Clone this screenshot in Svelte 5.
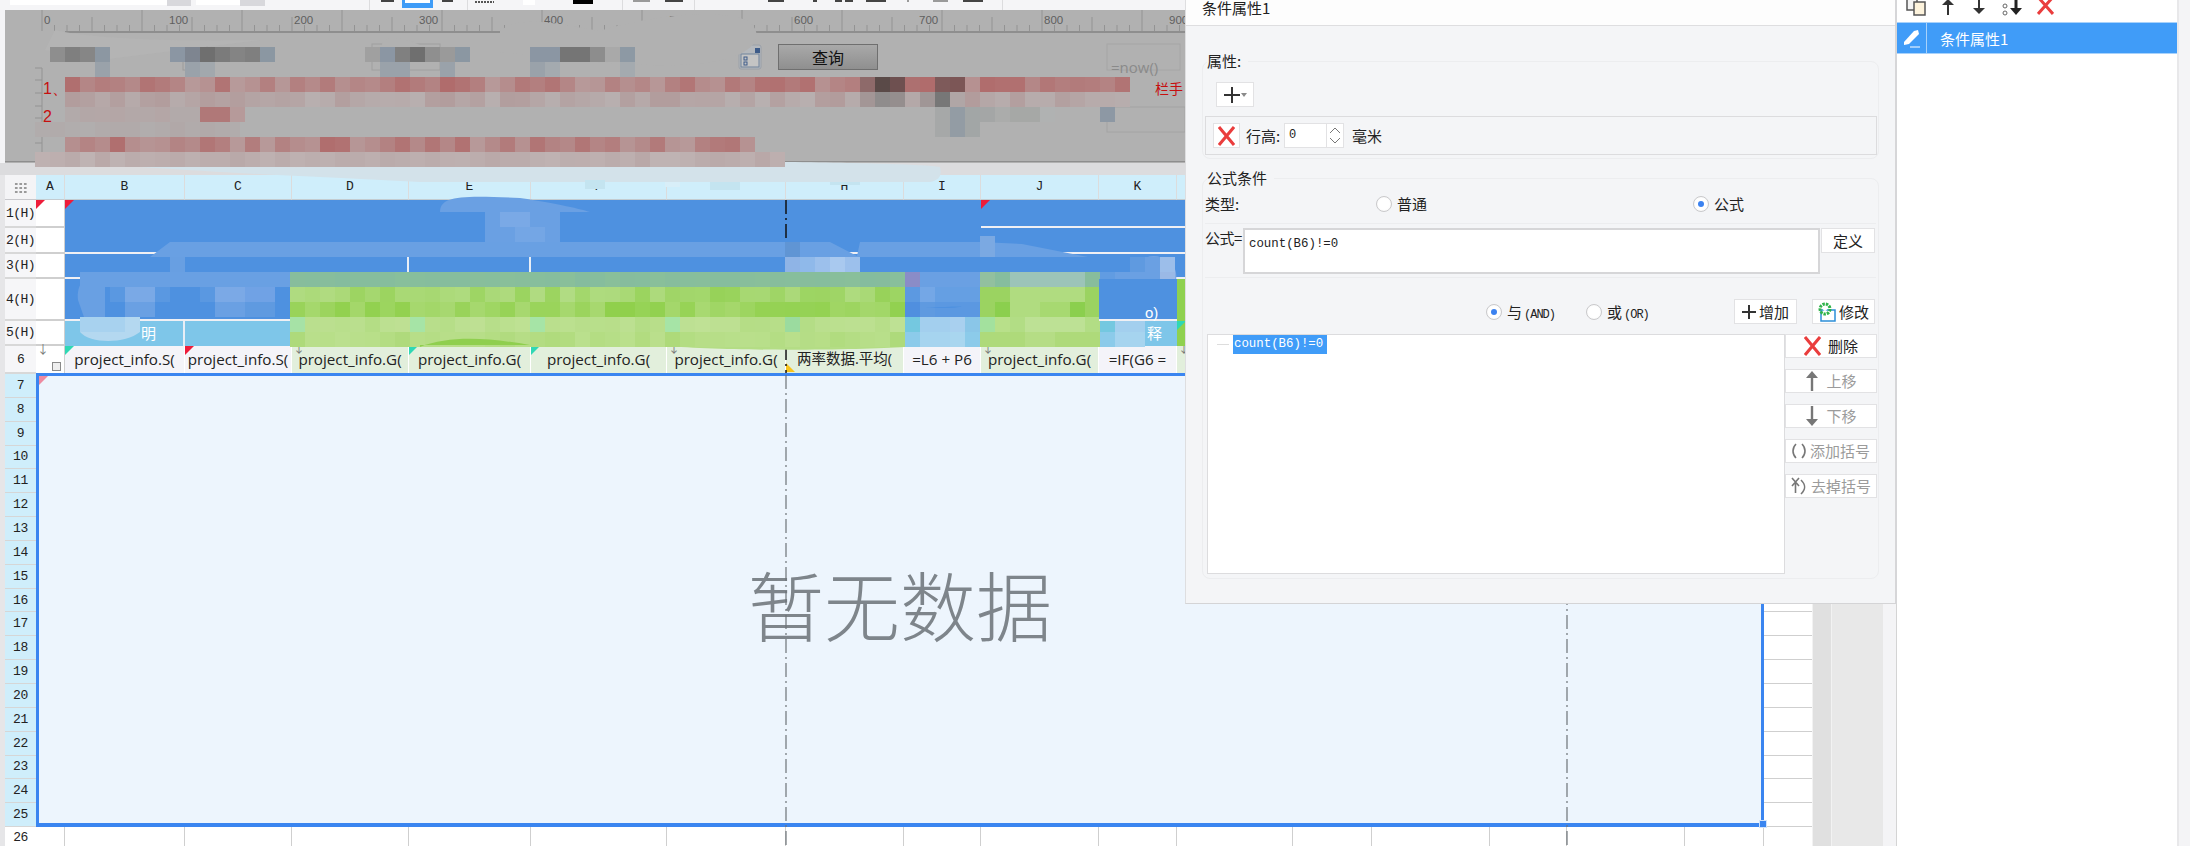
<script>
  const h = (i) => { const s = Math.sin(i * 12.9898) * 43758.5453; return s - Math.floor(s); };
  const hex = (c) => [1, 3, 5].map((p) => parseInt(c.slice(p, p + 2), 16));
  const mix = (a, b, t) => {
    const A = hex(a), B = hex(b);
    return `rgb(${A.map((v, i) => Math.round(v + (B[i] - v) * t)).join(',')})`;
  };
  const mosaic = [];
  let seed = 1;
  function band(y, x0, x1, a, b) {
    for (let x = x0; x < x1; x += 15) {
      seed += 1;
      mosaic.push({ x, y, w: Math.min(15, x1 - x), f: mix(a, b, h(seed)) });
    }
  }
  function cells(y, x0, list) {
    list.forEach((f, i) => mosaic.push({ x: x0 + i * 15, y, w: 15, f }));
  }
  // designer: blurred widgets
  cells(47, 50, ['#8e8e8e', '#7f7f7f', '#868686', '#8c97a2']);
  cells(47, 170, ['#8b96a3', '#7e8590', '#6f6f6f', '#7b7b7b', '#848484', '#7f7f7f', '#8b97a2']);
  cells(47, 365, ['#a0a0a0', '#8b96a3', '#808080', '#6f6f6f', '#8f8f8f', '#9a9a9a', '#8b97a2']);
  cells(47, 530, ['#8b96a3', '#8b96a3', '#757575', '#757575', '#808080']);
  cells(47, 590, ['#8d8d8d', '#a9a9a9', '#8d99a4']);
  cells(62, 95, ['#9aa2aa']);
  cells(62, 185, ['#9aa2aa', '#a2a8ad']);
  cells(62, 380, ['#9aa2aa', '#9aa2aa']);
  cells(62, 440, ['#9aa2aa']);
  cells(62, 530, ['#9aa2aa', '#a4aaaf']);
  cells(62, 620, ['#a4aaaf']);
  // designer: red lines
  band(77, 65, 1130, '#b06c6c', '#b79a9a');
  band(92, 65, 1130, '#b29c9c', '#b8b0b0');
  cells(77, 860, ['#8e6a6a', '#5a4a48', '#6e5050', '#ad7070', '#b06c6c', '#7e5a5a', '#7c5656']);
  cells(92, 860, ['#a39696', '#8f8c8c', '#958e8e', '#b4a8a8', '#a09696', '#777777', '#b0a6a6']);
  band(107, 65, 200, '#b2aaaa', '#b4a6a6');
  cells(107, 200, ['#b07878', '#b07878', '#b69a9a']);
  band(122, 35, 240, '#b1a8a8', '#b1aeae');
  cells(107, 935, ['#a6a8a8', '#939ca4', '#a2a6a6', '#a4a6a6', '#abacab', '#a6a8a6', '#a6a8a6', '#b0b2b2']);
  cells(122, 935, ['#a6a8a8', '#939ca4', '#a2a6a6']);
  cells(107, 1100, ['#8d98a4']);
  band(137, 65, 755, '#b06e6e', '#b79a9a');
  band(152, 35, 785, '#b9a8a8', '#bfb3b3');
  // table: blue + green strokes
  cells(212, 485, ['#6aa0e3', '#7aa9e6', '#7aa9e6', '#6aa0e3', '#6aa0e3']);
  cells(227, 485, ['#6aa0e3', '#6aa0e3', '#74a6e5', '#74a6e5', '#6aa0e3']);
  band(257, 170, 185, '#689fe2', '#689fe2');
  cells(257, 785, ['#8fb4e6', '#8fb9ea', '#9cc0ec', '#a9c9ef', '#9cc0ec']);
  cells(257, 1130, ['#5f9ae0', '#6aa0e3', '#9cbeea']);
  band(272, 80, 290, '#69a0e3', '#69a0e3');
  band(272, 290, 905, '#85bc9e', '#89bf9a');
  cells(272, 905, ['#8a8cc7', '#6aa0e3', '#6aa0e3', '#6aa0e3', '#6aa0e3']);
  cells(272, 980, ['#92c09f', '#86bd9e', '#9cc4b8', '#9cc4b8', '#9cc4b8', '#9cc4b8', '#9cc4b8', '#88bd9c']);
  cells(272, 1100, ['#619ce2', '#6aa0e3', '#6aa0e3', '#6aa0e3', '#9ab9e6']);
  cells(287, 110, ['#5a98e1', '#7aa9e6', '#7aa9e6', '#5a98e1']);
  cells(287, 200, ['#5a98e1', '#7ba9e6', '#7ba9e6', '#70a2e5', '#70a2e5']);
  cells(302, 110, ['#4e91e0', '#6aa0e3', '#6aa0e3']);
  cells(302, 215, ['#6aa0e3', '#6aa0e3', '#5f9ae0', '#5f9ae0']);
  band(287, 290, 905, '#91d04f', '#b2dc84');
  band(302, 290, 905, '#8fd04b', '#a9d972');
  cells(287, 905, ['#5c99e1', '#74a7e6', '#659fe3', '#659fe3', '#659fe3']);
  cells(302, 905, ['#508fdf', '#5f9ae0', '#5b98e1', '#5b98e1', '#5b98e1']);
  cells(287, 980, ['#9bd361', '#9bd361', '#b0dc80', '#b0dc80', '#b0dc80', '#b0dc80', '#b0dc80', '#9bd361']);
  cells(302, 980, ['#9bd361', '#8bcf4e', '#b0dc80', '#b0dc80', '#a7d971', '#a7d971', '#8bcf4e', '#9bd361']);
  cells(287, 1100, ['#4e91e0', '#5c99e1', '#6aa0e3', '#6aa0e3']);
  cells(302, 1100, ['#4e91e0', '#5c99e1', '#6aa0e3']);
  band(317, 290, 905, '#b4dd85', '#bfe195');
  band(332, 290, 905, '#aeda7a', '#bbe08e');
  cells(317, 290, ['#a6e2a6']);
  cells(317, 410, ['#a6e4a6']);
  cells(317, 530, ['#a6e4a6']);
  cells(317, 665, ['#a6e4a6']);
  cells(317, 785, ['#9bdb9f']);
  cells(317, 905, ['#74c8e0', '#a3cfee', '#a3cfee', '#a9d0ef', '#8ac6e8']);
  cells(332, 905, ['#8ccbea', '#a6d4ef', '#a6d4ef', '#a9d6ef', '#8ccbea']);
  cells(317, 980, ['#a3e19e', '#b8e08a', '#b2dd85', '#bde195', '#bde195', '#bde195', '#bde195', '#b2dd85']);
  cells(332, 980, ['#aeda7a', '#aeda7a', '#aeda7a', '#b5dd85', '#b5dd85', '#aeda7a', '#aeda7a', '#aeda7a']);
  cells(317, 1100, ['#74c8e0', '#a3cfee', '#a3cfee']);
  cells(332, 1100, ['#8ccbea', '#a6d4ef', '#a6d4ef']);
  cells(317, 80, ['#a8d2ef', '#a8d2ef', '#a8d2ef', '#b4d8f0']);

  const rulerTicks = [];
  for (let i = 0; i * 12.5 < 1150; i += 1) {
    const x = 42 + i * 12.5;
    rulerTicks.push({ x, top: i % 8 === 0 ? 10 : i % 4 === 0 ? 17 : 25 });
  }
  const rulerLabels = [0, 100, 200, 300, 400, 500, 600, 700, 800, 900];
  const sideTicks = [68, 80, 93, 106, 118, 131, 143, 156];

  const cols = ['B', 'C', 'D', 'E', 'F', 'G', 'H', 'I', 'J', 'K', 'L', 'M', 'N', 'O', 'P', 'Q', 'R'];
  const bodyRows = Array.from({ length: 19 }, (_, i) => i + 7);
  const row6 = [
    { t: 'project_info.S(', c: 'plain', flag: 'teal' },
    { t: 'project_info.S(', c: 'plain', flag: 'red' },
    { t: 'project_info.G(', c: 'pale', flag: 'down' },
    { t: 'project_info.G(', c: 'pale', flag: 'teal' },
    { t: 'project_info.G(', c: 'pale', flag: 'teal' },
    { t: 'project_info.G(', c: 'pale', flag: 'down' },
    { t: '两率数据.平均(', c: 'pale cjk', flag: 'amber' },
    { t: '=L6 + P6', c: 'plain' },
    { t: 'project_info.G(', c: 'pale', flag: 'down' },
    { t: '=IF(G6 =', c: 'plain' },
    { t: '', c: 'pale', flag: 'down' },
    { t: '', c: 'pale' }, { t: '', c: 'pale' }, { t: '', c: 'pale' }, { t: '', c: 'pale' }, { t: '', c: 'pale' }
  ];
  const toolMarks = [
    [10, 157, 'w'], [167, 24, 'g'], [196, 44, 'w'], [240, 25, 'g'], [369, 1, 'l'], [381, 13, 'd'],
    [405, 25, 'b'], [442, 11, 'd'], [467, 1, 'l'], [475, 19, 'dots'], [523, 12, 'w'], [573, 20, 'k'],
    [622, 1, 'l'], [633, 17, 'm'], [665, 18, 'd'], [694, 1, 'l'], [768, 16, 'd'], [813, 4, 'd'],
    [835, 7, 'd'], [845, 8, 'd'], [866, 20, 'd'], [907, 2, 'm'], [933, 15, 'm'], [963, 20, 'd'], [1002, 1, 'l']
  ];
</script>

<div class="page">
  <div class="main">
    <div class="toolbar">
      {#each toolMarks as m}
        <span class="mark {m[2]}" style="left:{m[0]}px;width:{m[1]}px"></span>
      {/each}
    </div>

    <div class="designer">
      <svg class="ruler" width="1180" height="153" viewBox="5 10 1180 153">
        {#each rulerTicks as t}
          <line x1={t.x} x2={t.x} y1={t.top} y2="31" stroke="#939393" />
        {/each}
        {#each rulerLabels as l, i}
          <text x={44 + i * 125} y="24" class="rtext">{l}</text>
        {/each}
        <rect x="65" y="31" width="1120" height="2" fill="#8e8e8e" />
        <line x1="42" x2="42" y1="68" y2="160" stroke="#939393" />
        {#each sideTicks as y}
          <line x1="35" x2="42" y1={y} y2={y} stroke="#939393" />
        {/each}
        <rect x="183" y="44" width="24" height="26" fill="none" stroke="#9c9c9c" />
        <rect x="372" y="44" width="68" height="26" fill="none" stroke="#a0a0a0" />
        <rect x="1107" y="107" width="78" height="25" fill="none" stroke="#a4a4a4" />
        <rect x="1107" y="44" width="73" height="26" fill="none" stroke="#a6a6a6" />
      </svg>
      <span class="nowtext">=now()</span>
      <span class="date">
        <svg width="24" height="26" viewBox="0 0 24 26">
          <rect x="1" y="1" width="22" height="24" rx="2" fill="#b4b8bd" stroke="#9aa0a8" />
          <rect x="3" y="10" width="18" height="13" fill="#c4c4c4" stroke="#71839c" />
          <rect x="17" y="4" width="5" height="5" fill="#3d5b89" />
          <rect x="6" y="13" width="3" height="3" fill="none" stroke="#3d5b89" />
          <rect x="6" y="18" width="3" height="3" fill="none" stroke="#3d5b89" />
        </svg>
      </span>
      <button class="query">查询</button>
      <span class="num one">1、</span>
      <span class="num two">2</span>
      <span class="redtail">栏手</span>
    </div>
    <div class="strip"></div>

    <div class="sheetwrap">
      <div class="gutter"></div>
      <div class="sheet">
        <div class="corner"><span class="grip"></span></div>
        <div class="colhead">A</div>
        {#each cols as c}
          <div class="colhead">{c === 'R' ? '' : c}</div>
        {/each}

        <div class="rowhead soft">1(H)</div>
        <div class="blank"><i class="flag red"></i></div>
        <div class="blue s8"><i class="flag red"></i></div>
        <div class="blue s8 line"><i class="flag red"></i></div>
        <div class="blank"></div>

        <div class="rowhead soft">2(H)</div>
        <div class="blank"></div>
        <div class="blue s8 line"></div>
        <div class="blue s8 line"></div>
        <div class="blank"></div>

        <div class="rowhead soft">3(H)</div>
        <div class="blank"></div>
        <div class="blue s3 line div"></div>
        <div class="blue div line"></div>
        <div class="blue s4 line"></div>
        <div class="blue s8 line"></div>
        <div class="blank"></div>

        <div class="rowhead soft">4(H)</div>
        <div class="blank"></div>
        <div class="blue s2 line"></div>
        <div class="green s5 line"></div>
        <div class="blue line"></div>
        <div class="green line"></div>
        <div class="blue line note">o)</div>
        <div class="green s6"></div>
        <div class="blank"></div>

        <div class="rowhead soft">5(H)</div>
        <div class="blank"></div>
        <div class="sky div"><span class="skytext left">明</span></div>
        <div class="sky"></div>
        <div class="green s5"></div>
        <div class="sky"></div>
        <div class="green"></div>
        <div class="sky"><span class="skytext right">释</span></div>
        <div class="green s6"><i class="flag teal"></i></div>
        <div class="blank"></div>

        <div class="rowhead soft">6</div>
        <div class="blank a6">
          <i class="darrow">↓</i>
          <span class="expand"></span>
        </div>
        {#each row6 as c}
          <div class="formula {c.c}">
            {#if c.flag === 'down'}<i class="darrow">↓</i>{:else if c.flag}<i class="flag {c.flag}"></i>{/if}
            <span>{c.t}</span>
          </div>
        {/each}
        <div class="blank"></div>

        {#each bodyRows as r, i}
          <div class="rowhead">{r}</div>
          {#if i === 0}
            <div class="selection">
              <i class="flag ghost"></i>
              <div class="empty">暂无数据</div>
              <i class="handle"></i>
            </div>
          {/if}
          <div class="blank ruled"></div>
        {/each}

        <div class="rowhead soft last">26</div>
        {#each Array(17) as _}
          <div class="blank tail"></div>
        {/each}
        <div class="blank open"></div>
      </div>
      <div class="rail one"></div>
      <div class="rail two"></div>
      <div class="rail three"></div>
    </div>

    <svg class="overlay" width="1897" height="846" viewBox="0 0 1897 846">
      <path d="M786 200V242M786 346V373" stroke="#111" stroke-width="1.5" stroke-dasharray="14 4 2 4" />
      <path d="M786 375V846M1567 375V846" stroke="#6d7378" stroke-width="1.2" stroke-dasharray="14 4 2 4" />
      <path d="M140 167C260 163 300 172 350 163C500 160 900 160 940 167C942 175 940 180 930 182L420 182C340 178 260 175 140 167Z" fill="#d3e2ea" />
      <rect x="585" y="180" width="20" height="9" fill="#c4e4f0" />
      <rect x="665" y="182" width="15" height="5" fill="#d8eef8" />
      <rect x="710" y="182" width="30" height="8" fill="#c4e4f0" />
      <rect x="830" y="182" width="30" height="3" fill="#c4e4f0" />
      <path d="M500 31C520 14 560 24 600 31C640 18 720 6 750 22C760 32 760 44 740 54C700 72 620 66 500 52Z" fill="#b1b1b1" />
      <path d="M383 40C400 34 420 44 440 56L380 54Z" fill="#b1b1b1" />
      <path d="M55 30C80 36 140 42 260 40L100 60L45 50Z" fill="#b4b4b4" />
      <path d="M150 257L170 242H830L857 256L860 242H980L1022 244L1088 257Z" fill="#69a0e3" />
      <rect x="785" y="242" width="15" height="15" fill="#6095d4" />
      <rect x="980" y="236" width="15" height="21" fill="#7ba9e2" />
      <path d="M440 212C440 196 460 195 520 198C560 204 580 209 590 212Z" fill="#6aa0e3" />
      <rect x="485" y="212" width="75" height="15" fill="#6aa0e3" />
      <path d="M1130 272C1135 258 1155 250 1170 262C1180 270 1178 290 1165 300L1130 300Z" fill="#7faae6" />
      <path d="M78 300C76 285 85 272 105 272V320H85Z" fill="#69a0e3" />
      <path d="M290 345H660C720 352 860 350 905 347V345H980V342C1020 346 1060 350 1099 342V345H290Z" fill="#b4dd85" />
      <path d="M290 340C340 349 390 347 420 344L530 345H290Z" fill="#afdb7d" />
      {#each mosaic as m}
        <rect x={m.x} y={m.y} width={m.w} height="15" fill={m.f} shape-rendering="crispEdges" />
      {/each}
      <path d="M80 332C90 344 125 344 140 332Z" fill="#b4d8f0" />
      <path d="M420 347C450 335 490 338 530 345L420 345Z" fill="#8fcf4e" />
      <path d="M950 308C975 306 955 306 925 308Z" fill="#4e91e0" />
    </svg>

    <section class="dialog">
      <header class="title">条件属性1</header>
      <div class="group first">
        <span class="legend">属性:</span>
        <button class="tool plus">
          <svg width="16" height="16" viewBox="0 0 16 16"><path d="M8 0V16M0 8H16" stroke="#333" stroke-width="2" /></svg>
          <svg width="6" height="4" viewBox="0 0 6 4"><path d="M0 0H6L3 4Z" fill="#8a8a8a" /></svg>
        </button>
        <div class="propbar">
          <button class="tool square">
            <svg width="17" height="20" viewBox="0 0 17 20"><path d="M1 1L16 19M16 1L1 19" stroke="#ea3d3d" stroke-width="3" /></svg>
          </button>
          <span class="label">行高:</span>
          <span class="spin">
            <span class="val">0</span>
            <span class="arrows">
              <svg width="10" height="6" viewBox="0 0 10 6"><path d="M0 6L5 1L10 6" fill="none" stroke="#777" /></svg>
              <svg width="10" height="6" viewBox="0 0 10 6"><path d="M0 0L5 5L10 0" fill="none" stroke="#777" /></svg>
            </span>
          </span>
          <span class="label unit">毫米</span>
        </div>
      </div>

      <div class="group second">
        <span class="legend">公式条件</span>
        <div class="typerow">
          <span class="typelabel">类型:</span>
          <span class="radio"></span><span class="rtxt w1">普通</span>
          <span class="radio on"></span><span class="rtxt">公式</span>
        </div>
        <div class="formularow">
          <span class="flabel">公式=</span>
          <div class="area">count(B6)!=0</div>
          <button class="tool define">定义</button>
        </div>
        <div class="logicrow">
          <span class="radio on"></span><span class="rtxt w2">与<em>(AND)</em></span>
          <span class="radio"></span><span class="rtxt w3">或<em>(OR)</em></span>
          <button class="tool act">
            <svg width="14" height="14" viewBox="0 0 14 14"><path d="M7 0V14M0 7H14" stroke="#333" stroke-width="2" /></svg>增加
          </button>
          <button class="tool act">
            <svg width="18" height="20" viewBox="0 0 18 20">
              <path d="M3 8H17V19H3Z" fill="#fff" stroke="#2d8fd8" stroke-width="1.5" />
              <circle cx="7" cy="7" r="5" fill="none" stroke="#2fb34a" stroke-width="3" stroke-dasharray="2.4 1" />
              <circle cx="7" cy="7" r="2" fill="#fff" />
            </svg>修改
          </button>
        </div>
        <div class="treerow">
          <div class="tree">
            <i class="stub"></i><span class="node">count(B6)!=0</span>
          </div>
          <div class="side">
            <button class="tool sbtn">
              <svg width="17" height="20" viewBox="0 0 17 20"><path d="M1 1L16 19M16 1L1 19" stroke="#ea3d3d" stroke-width="3" /></svg>删除
            </button>
            <button class="tool sbtn off">
              <svg width="14" height="20" viewBox="0 0 14 20"><path d="M7 20V4" stroke="#777" stroke-width="2.4" /><path d="M1 7L7 0L13 7Z" fill="#777" /></svg>上移
            </button>
            <button class="tool sbtn off">
              <svg width="14" height="20" viewBox="0 0 14 20"><path d="M7 0V16" stroke="#777" stroke-width="2.4" /><path d="M1 13L7 20L13 13Z" fill="#777" /></svg>下移
            </button>
            <button class="tool sbtn off tight">
              <svg width="14" height="16" viewBox="0 0 14 16"><path d="M4 1C0 5 0 11 4 15M10 1C14 5 14 11 10 15" fill="none" stroke="#777" stroke-width="1.6" /></svg>添加括号
            </button>
            <button class="tool sbtn off tight">
              <svg width="16" height="18" viewBox="0 0 16 18"><path d="M1 1L8 9M8 1L1 9M4.5 6V16" stroke="#777" stroke-width="1.6" fill="none" /><path d="M10 3C15 8 15 12 10 17" fill="none" stroke="#777" stroke-width="1.6" /></svg>去掉括号
            </button>
          </div>
        </div>
      </div>
    </section>
  </div>

  <aside class="panel">
    <div class="ptools">
      <svg width="22" height="16" viewBox="0 0 22 16"><path d="M2 -4H12V10H2Z" fill="#f4f4f4" stroke="#555" stroke-width="1.5" /><path d="M9 2H20V15H9Z" fill="#fdf3dc" stroke="#555" stroke-width="1.5" /></svg>
      <svg class="p1" width="14" height="15" viewBox="0 0 14 15"><path d="M7 15V3" stroke="#333" stroke-width="2" /><path d="M1 5L7 -1L13 5Z" fill="#333" /></svg>
      <svg class="p2" width="14" height="15" viewBox="0 0 14 15"><path d="M7 0V10" stroke="#333" stroke-width="2" /><path d="M1 8L7 14L13 8Z" fill="#333" /></svg>
      <svg class="p3" width="22" height="17" viewBox="0 0 22 17"><circle cx="3" cy="6" r="2" fill="none" stroke="#666" /><circle cx="3" cy="13" r="2" fill="none" stroke="#666" /><path d="M14 0V10" stroke="#222" stroke-width="3" /><path d="M8 8L14 15L20 8Z" fill="#222" /></svg>
      <svg class="p4" width="17" height="15" viewBox="0 0 17 15"><path d="M1 -3L16 14M16 -3L1 14" stroke="#ea3d3d" stroke-width="3" /></svg>
    </div>
    <div class="pitem">
      <span class="pen">
        <svg width="18" height="19" viewBox="0 0 18 19"><path d="M1 13L11 2L15 1L16 5L6 15L1 16Z" fill="#fff" /><path d="M7 18H17" stroke="#fff" /></svg>
      </span>
      <span class="ptext">条件属性1</span>
    </div>
  </aside>
  <div class="edge"></div>
</div>

<style>
  :global(body) { margin: 0; background: #f4f4f6; }
  .page {
    display: flex;
    width: 2190px;
    height: 846px;
    overflow: hidden;
    font-family: "Noto Sans CJK SC", "Liberation Sans", sans-serif;
    color: #222;
  }
  .main { position: relative; width: 1897px; flex: none; display: flex; flex-direction: column; background: #f4f4f6; }
  .toolbar { position: relative; height: 10px; background: #f5f5f7; flex: none; }
  .mark { position: absolute; top: 0; height: 5px; }
  .mark.w { background: #fff; height: 5px; }
  .mark.g { background: #d8d8dc; height: 6px; }
  .mark.l { background: #dcdcde; height: 10px; }
  .mark.d { background: #444; height: 2px; }
  .mark.m { background: #9a9a9a; height: 2px; }
  .mark.k { background: #000; height: 4px; }
  .mark.b { background: #fff; height: 3px; box-shadow: 0 2px 0 3px #3f9cf7; }
  .mark.dots { top: 1px; height: 2px; background: repeating-linear-gradient(90deg, #555 0 2px, transparent 2px 3px); }

  .designer { position: relative; height: 153px; margin-left: 5px; background: #b1b1b1; flex: none; }
  .designer::after { content: ""; position: absolute; left: 0; right: 0; top: 151px; height: 1px; background: #8e8e8e; }
  .ruler { position: absolute; left: 0; top: 0; }
  .rtext { font: 11.5px "Liberation Sans", sans-serif; fill: #5f5f5f; }
  .nowtext { position: absolute; left: 1106px; top: 44px; font: 15px/26px "Open Sans", sans-serif; color: #8a8a8a; }
  .date { position: absolute; left: 733px; top: 34px; height: 26px; }
  .query {
    position: absolute; left: 773px; top: 34px; width: 100px; height: 26px; padding: 0;
    background: linear-gradient(#a9a9a9, #8f8f8f); border: 1px solid #6f6f6f; font: 16px/22px "Noto Sans CJK SC", sans-serif; color: #111;
  }
  .num { position: absolute; color: #c60f0f; font: 16px/18px "Liberation Sans", sans-serif; left: 38px; }
  .num.one { top: 70px; }
  .num.two { top: 98px; }
  .redtail { position: absolute; left: 1150px; top: 69px; color: #c60f0f; font-size: 14px; line-height: 18px; white-space: nowrap; }
  .strip { height: 12px; flex: none; background: #dcdcde; }

  .sheetwrap { flex: 1; display: flex; min-height: 0; }
  .gutter { width: 5px; flex: none; background: #e6e6e8; }
  .sheet {
    width: 1807px; flex: none;
    display: grid;
    grid-template-columns: 31px 29px 120px 107px 117px 122px 136px 119px 118px 77px 118px 78px 116px 79px 118px 77px 118px 79px 48px;
    grid-template-rows: 25px 28px 26px 25px 42px 25px 28px repeat(19, 23.85px) 21px;
    background: #fff;
  }
  .corner { background: #f4f4f6; display: flex; align-items: center; justify-content: center; border-bottom: 1px solid #c8c8cc; box-sizing: border-box; }
  .grip { width: 13px; height: 11px; background: radial-gradient(circle, #9a9a9a 1.3px, transparent 1.5px) 0 0 / 4.5px 4px; }
  .colhead {
    background: #cfeefb; font: 13px/24px "Liberation Mono", monospace; text-align: center; color: #222;
    border-right: 1px solid #dcdcdc; border-bottom: 1px solid #c4ccd0; box-sizing: border-box;
  }
  .rowhead {
    background: #cfeefb; font: 13px/1 "Liberation Mono", monospace; color: #222; display: flex; align-items: center; justify-content: center;
    border-bottom: 1px solid #d6d6d6; box-sizing: border-box; letter-spacing: -0.4px;
  }
  .rowhead.soft { background: #f6f6f8; border-bottom: 2px solid #d8d8d8; letter-spacing: -0.6px; }
  .rowhead.last { background: #fff; border: 0; }
  .blank { position: relative; background: #fff; border-bottom: 2px solid #cfcfcf; border-right: 1px solid #cfcfcf; box-sizing: border-box; }
  .a6 { background: #fff; border-bottom: 0; }
  .expand { position: absolute; right: 3px; bottom: 3px; width: 7px; height: 7px; border: 1px solid #8a8a8a; background: #eee; }
  .ruled { border-right: 0; border-bottom: 1.5px solid #cfcfcf; }
  .tail { border-bottom: 0; border-right: 1.5px solid #cfcfcf; }
  .open { border: 0; }
  .blue, .green, .sky { position: relative; box-sizing: border-box; min-width: 0; }
  .blue { background: #4e91e0; }
  .green { background: #8fd14f; }
  .sky { background: #7ec6e9; }
  .s2 { grid-column: span 2; }
  .s3 { grid-column: span 3; }
  .s4 { grid-column: span 4; }
  .s5 { grid-column: span 5; }
  .s6 { grid-column: span 6; }
  .s8 { grid-column: span 8; }
  .line { border-bottom: 2px solid #f0f0f4; }
  .div { border-right: 2px solid #e8eef6; }
  .note { color: #fff; font: 15px/1 "Liberation Sans", sans-serif; padding: 26px 0 0 46px; position: relative; z-index: 6; }
  .skytext { position: absolute; top: 2px; color: #fff; font-size: 15px; line-height: 20px; }
  .skytext.left { left: 76px; }
  .skytext.right { left: 48px; z-index: 9; }
  .formula {
    position: relative; box-sizing: border-box; overflow: hidden; text-align: center; white-space: nowrap;
    font: 15.2px/26px "Open Sans", "Noto Sans CJK SC", sans-serif; color: #222; border-right: 1px solid #fff;
    padding-bottom: 2px;
  }
  .formula.cjk { font-size: 14.5px; }
  .formula.plain { background: #f4f4f9; }
  .formula.pale { background: #e2efdc; }
  .flag { position: absolute; left: 0; top: 0; width: 9px; height: 9px; clip-path: polygon(0 0, 100% 0, 0 100%); z-index: 2; }
  .flag.red { background: #ee1c3a; }
  .flag.teal { background: #2fd8b4; }
  .flag.amber { background: #f7c31c; top: auto; bottom: 2px; clip-path: polygon(0 0, 100% 100%, 0 100%); }
  .flag.ghost { background: #ee8aa0; }
  .darrow { position: absolute; left: 1px; top: -7px; font-style: normal; font-size: 12px; color: #777; line-height: 20px; }
  .selection {
    position: relative; grid-column: 2 / span 17; grid-row: span 19; background: #edf5fd;
    border: 3px solid #3a85f0; border-bottom-width: 4px; box-sizing: border-box; margin-top: -1px; z-index: 1;
    display: flex; align-items: center; justify-content: center;
  }
  .empty { font: 300 76px/1 "Noto Sans CJK SC", sans-serif; color: #7e858b; margin: 6px 0 0 0; }
  .handle { position: absolute; right: -6px; bottom: -5px; width: 6px; height: 6px; background: #3a85f0; border: 1px solid #cfe2fb; }
  .rail { height: 100%; flex: none; box-sizing: border-box; }
  .rail.one { width: 19px; background: #e0e0e0; border-left: 1px solid #f2f2f2; }
  .rail.two { width: 52px; background: #e8e8e8; border-left: 1px solid #f2f2f2; }
  .rail.three { width: 14px; background: #f4f4f6; border-right: 1px solid #d4d4d4; }
  .overlay { position: absolute; left: 0; top: 0; z-index: 5; pointer-events: none; }

  .dialog {
    position: absolute; left: 1185px; top: 0; width: 712px; height: 604px; z-index: 10; box-sizing: border-box;
    background: #f4f5f7; border-right: 2px solid #d6d6d8; border-bottom: 1px solid #d4d4d6; border-left: 1px solid #dedee0;
    font-size: 15px; line-height: 20px;
  }
  .title { height: 26px; background: #fdfdfd; border-bottom: 1px solid #dedee0; padding-left: 16px; font-size: 15px; line-height: 15px; box-sizing: border-box; }
  .group { position: relative; margin: 0 16px; border: 1px solid #ecedef; border-radius: 8px; box-sizing: border-box; }
  .group.first { margin-top: 35px; height: 98px; padding: 20px 1px 0; }
  .group.second { margin-top: 19px; height: 401px; padding: 0 1px; }
  .legend { position: absolute; left: 4px; top: -11px; background: #f4f5f7; padding-right: 7px; font-size: 15px; line-height: 20px; }
  .tool { background: #fff; border: 1px solid #e2e2e4; padding: 0; display: flex; align-items: center; justify-content: center; font: 15px/20px "Noto Sans CJK SC", sans-serif; color: #222; box-sizing: border-box; }
  .plus { width: 38px; height: 25px; margin-left: 12px; gap: 1px; }
  .propbar { display: flex; align-items: center; height: 39px; margin: 9px 0 0 1px; width: 672px; box-sizing: border-box; padding-left: 7px; border: 1px solid #dcdcde; background: #f4f5f7; }
  .square { width: 27px; height: 25px; }
  .label { margin-left: 6px; width: 38px; }
  .unit { margin-left: 8px; }
  .spin { display: flex; width: 60px; height: 25px; background: #fff; border: 1px solid #e2e2e4; box-sizing: border-box; font: 12px/23px "Liberation Mono", monospace; }
  .val { flex: 1; padding-left: 4px; }
  .arrows { width: 16px; display: flex; flex-direction: column; align-items: center; justify-content: space-around; border-left: 1px solid #e2e2e4; }

  .typerow { display: flex; align-items: center; height: 45px; padding-top: 5px; box-sizing: border-box; border-bottom: 1px solid #ecedef; margin: 0 1px; }
  .typelabel { width: 171px; }
  .radio { width: 16px; height: 16px; flex: none; border-radius: 50%; background: radial-gradient(circle, #fff 55%, #eee); border: 1px solid #c9c9cb; box-sizing: border-box; position: relative; }
  .radio.on::after { content: ""; position: absolute; left: 4px; top: 4px; width: 6px; height: 6px; border-radius: 50%; background: #3b82f0; }
  .rtxt { margin-left: 5px; flex: none; }
  .rtxt.w1 { width: 296px; }
  .rtxt em { font: normal 12px "Liberation Mono", monospace; letter-spacing: -1px; margin-left: 2px; }
  .w2 { width: 79px; }
  .w3 { width: 127px; }
  .formularow { display: flex; align-items: flex-start; height: 54px; margin: 0 1px; padding-top: 4px; box-sizing: border-box; border-bottom: 1px solid #ecedef; }
  .flabel { width: 38px; flex: none; white-space: nowrap; letter-spacing: -0.5px; }
  .area { width: 577px; height: 46px; flex: none; background: #fff; border: 2px solid #d6d6d8; box-sizing: border-box; font: 12.4px/28px "Liberation Mono", monospace; padding-left: 4px; }
  .define { width: 54px; height: 25px; margin-left: 1px; }
  .logicrow { display: flex; align-items: center; height: 25px; margin: 21px 0 0 282px; }
  .act { width: 63px; height: 25px; gap: 3px; flex: none; }
  .act + .act { margin-left: 15px; }
  .treerow { display: flex; margin: 10px 0 0 3px; align-items: flex-start; }
  .tree { width: 578px; height: 240px; flex: none; background: #fff; border: 1px solid #dcdcde; box-sizing: border-box; display: flex; align-items: flex-start; }
  .stub { width: 12px; height: 1px; background: #ddd; margin: 9px 0 0 9px; flex: none; }
  .node { margin-left: 4px; height: 19px; width: 94px; background: #409cf8; color: #fff; font: 12.4px/19px "Liberation Mono", monospace; padding-left: 1px; box-sizing: border-box; white-space: nowrap; }
  .side { width: 92px; display: flex; flex-direction: column; gap: 11px; flex: none; }
  .sbtn { height: 24px; width: 92px; gap: 7px; }
  .off { color: #9b9b9b; }
  .tight { gap: 4px; font-size: 15px; }

  .panel { width: 280px; flex: none; background: #fff; display: flex; flex-direction: column; }
  .ptools { height: 22px; display: flex; align-items: flex-start; padding-left: 8px; box-sizing: border-box; }
  .p1 { margin-left: 14px; }
  .p2 { margin-left: 17px; }
  .p3 { margin-left: 16px; }
  .p4 { margin-left: 13px; }
  .pitem { display: flex; height: 32px; background: #409cf8; border-top: 1px solid #a8d2fb; border-bottom: 1px solid #a8d2fb; box-sizing: border-box; color: #fff; align-items: center; }
  .pen { width: 30px; height: 100%; display: flex; align-items: center; justify-content: center; border-right: 1px solid #a8d2fb; box-sizing: border-box; }
  .ptext { margin-left: 13px; font-size: 15px; }
  .edge { flex: 1; background: #f4f4f6; border-left: 2px solid #e8e8ea; }
</style>
